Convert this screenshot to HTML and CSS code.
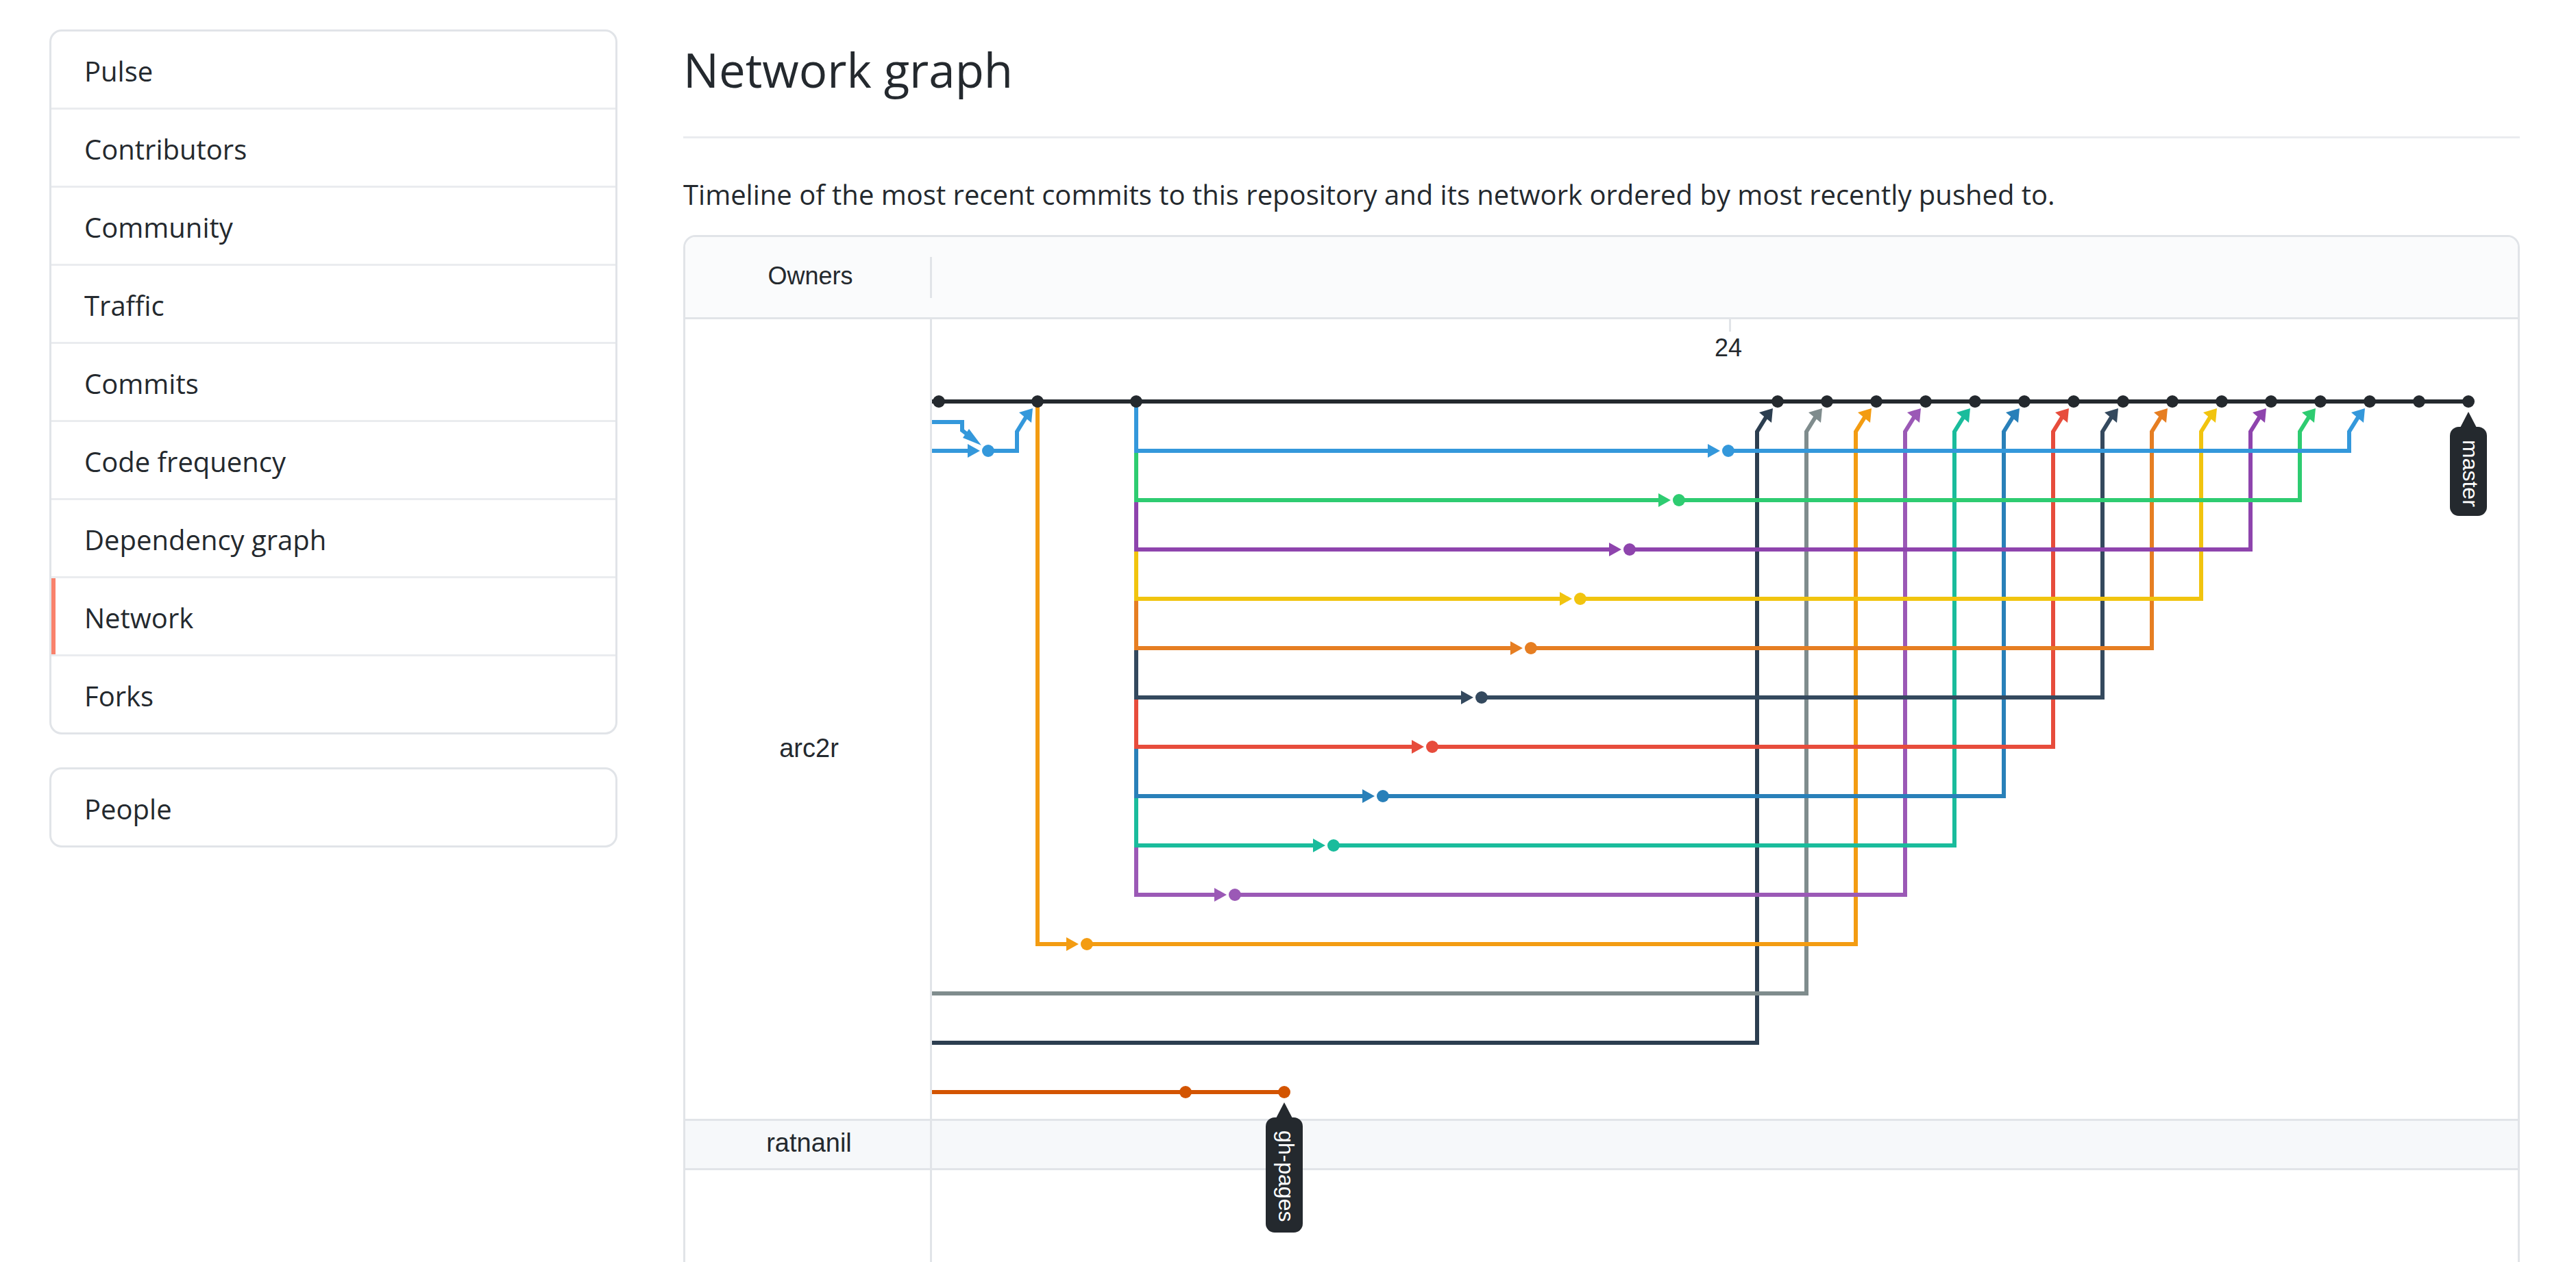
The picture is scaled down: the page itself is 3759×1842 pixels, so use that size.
FILE: index.html
```html
<!DOCTYPE html>
<html lang="en">
<head>
<meta charset="utf-8">
<meta name="viewport" content="width=device-width, initial-scale=1">
<title>Network graph</title>
<link rel="stylesheet" href="styles.css">
</head>
<body>
<div class="page">
  <aside class="sidebar">
    <nav class="menu" aria-label="Insights">
      <a class="menu-item" href="#pulse">Pulse</a>
      <a class="menu-item" href="#contributors">Contributors</a>
      <a class="menu-item" href="#community">Community</a>
      <a class="menu-item" href="#traffic">Traffic</a>
      <a class="menu-item" href="#commits">Commits</a>
      <a class="menu-item" href="#code-frequency">Code frequency</a>
      <a class="menu-item" href="#dependencies">Dependency graph</a>
      <a class="menu-item selected" href="#network" aria-current="page">Network</a>
      <a class="menu-item" href="#forks">Forks</a>
    </nav>
    <nav class="menu" aria-label="People">
      <a class="menu-item" href="#people">People</a>
    </nav>
  </aside>

  <main class="content">
    <h1 class="title">Network graph</h1>
    <p class="lead">Timeline of the most recent commits to this repository and its network ordered by most recently pushed to.</p>

    <section class="network" aria-label="Network graph">
      <div class="network-head">
        <div class="head-cell">Owners</div>
      </div>
      <div class="network-body">
        <div class="row row-main"><div class="owner">arc2r</div></div>
        <div class="row row-fork"><div class="owner">ratnanil</div></div>
        <div class="row row-rest"><div class="owner"></div></div>

        <svg class="graph" role="img" aria-label="Commit timeline">
          <defs>
            <!-- arrow heads and dots, placed by the centre of their commit -->
            <path id="merge" d="M-7 10L-27 16L-9 31Z"/>
            <path id="fork" d="M-12 0L-30 -10V10Z"/>
            <circle id="dot" r="9"/>
          </defs>

          <rect class="tick" x="1163" y="0" width="3" height="18"/>
          <text class="date" x="1162" y="54">24</text>

          <g class="branch orange-dark">
            <path d="M0 1128H514"/>
            <use href="#dot" x="370" y="1128"/><use href="#dot" x="514" y="1128"/>
          </g>
          <g class="branch midnight">
            <path d="M0 1056H1204V164L1217 143"/>
            <use href="#merge" x="1234" y="120"/>
          </g>
          <g class="branch gray">
            <path d="M0 984H1276V164L1289 143"/>
            <use href="#merge" x="1306" y="120"/>
          </g>
          <g class="branch amber">
            <path d="M154 120V912H196M226 912H1348V164L1361 143"/>
            <use href="#fork" x="226" y="912"/><use href="#dot" x="226" y="912"/><use href="#merge" x="1378" y="120"/>
          </g>
          <g class="branch violet">
            <path d="M298 120V840H412M442 840H1420V164L1433 143"/>
            <use href="#fork" x="442" y="840"/><use href="#dot" x="442" y="840"/><use href="#merge" x="1450" y="120"/>
          </g>
          <g class="branch teal">
            <path d="M298 120V768H556M586 768H1492V164L1505 143"/>
            <use href="#fork" x="586" y="768"/><use href="#dot" x="586" y="768"/><use href="#merge" x="1522" y="120"/>
          </g>
          <g class="branch blue-dark">
            <path d="M298 120V696H628M658 696H1564V164L1577 143"/>
            <use href="#fork" x="658" y="696"/><use href="#dot" x="658" y="696"/><use href="#merge" x="1594" y="120"/>
          </g>
          <g class="branch red">
            <path d="M298 120V624H700M730 624H1636V164L1649 143"/>
            <use href="#fork" x="730" y="624"/><use href="#dot" x="730" y="624"/><use href="#merge" x="1666" y="120"/>
          </g>
          <g class="branch slate">
            <path d="M298 120V552H772M802 552H1708V164L1721 143"/>
            <use href="#fork" x="802" y="552"/><use href="#dot" x="802" y="552"/><use href="#merge" x="1738" y="120"/>
          </g>
          <g class="branch orange">
            <path d="M298 120V480H844M874 480H1780V164L1793 143"/>
            <use href="#fork" x="874" y="480"/><use href="#dot" x="874" y="480"/><use href="#merge" x="1810" y="120"/>
          </g>
          <g class="branch yellow">
            <path d="M298 120V408H916M946 408H1852V164L1865 143"/>
            <use href="#fork" x="946" y="408"/><use href="#dot" x="946" y="408"/><use href="#merge" x="1882" y="120"/>
          </g>
          <g class="branch purple">
            <path d="M298 120V336H988M1018 336H1924V164L1937 143"/>
            <use href="#fork" x="1018" y="336"/><use href="#dot" x="1018" y="336"/><use href="#merge" x="1954" y="120"/>
          </g>
          <g class="branch green">
            <path d="M298 120V264H1060M1090 264H1996V164L2009 143"/>
            <use href="#fork" x="1090" y="264"/><use href="#dot" x="1090" y="264"/><use href="#merge" x="2026" y="120"/>
          </g>
          <g class="branch blue">
            <path d="M298 120V192H1132M1162 192H2068V164L2081 143"/>
            <use href="#fork" x="1162" y="192"/><use href="#dot" x="1162" y="192"/><use href="#merge" x="2098" y="120"/>
            <path d="M0 192H52M82 192H124V164L137 143M0 150H44V162L54 170"/>
            <path class="head" d="M72 184L45 173L54 160Z"/>
            <use href="#fork" x="82" y="192"/><use href="#dot" x="82" y="192"/><use href="#merge" x="154" y="120"/>
          </g>
          <g class="branch ink">
            <path d="M0 120H2242"/>
            <use href="#dot" x="10" y="120"/><use href="#dot" x="154" y="120"/><use href="#dot" x="298" y="120"/>
            <use href="#dot" x="1234" y="120"/><use href="#dot" x="1306" y="120"/><use href="#dot" x="1378" y="120"/>
            <use href="#dot" x="1450" y="120"/><use href="#dot" x="1522" y="120"/><use href="#dot" x="1594" y="120"/>
            <use href="#dot" x="1666" y="120"/><use href="#dot" x="1738" y="120"/><use href="#dot" x="1810" y="120"/>
            <use href="#dot" x="1882" y="120"/><use href="#dot" x="1954" y="120"/><use href="#dot" x="2026" y="120"/>
            <use href="#dot" x="2098" y="120"/><use href="#dot" x="2170" y="120"/><use href="#dot" x="2242" y="120"/>
          </g>

          <g class="ref" transform="translate(2242 120)">
            <path d="M0 15L13 40H-13Z"/>
            <rect x="-27" y="37" width="54" height="130" rx="13"/>
            <text transform="translate(-8 56) rotate(90)">master</text>
          </g>
          <g class="ref" transform="translate(514 1128)">
            <path d="M0 15L13 40H-13Z"/>
            <rect x="-27" y="37" width="54" height="168" rx="13"/>
            <text transform="translate(-8 56) rotate(90)">gh-pages</text>
          </g>
        </svg>
      </div>
    </section>
  </main>
</div>
</body>
</html>
```
FILE: styles.css
```css
* {
  box-sizing: border-box;
}

body {
  margin: 0;
  background: #fff;
  color: #24292e;
  font-family: "Segoe UI", "Open Sans", "Noto Sans", sans-serif;
  font-size: 40px;
  line-height: 63px;
}

.page {
  display: flex;
  gap: 96px;
  min-height: 100vh;
  padding: 43px 82px 0 72px;
}

/* Sidebar */
.sidebar {
  flex: 0 0 829px;
  display: flex;
  flex-direction: column;
  gap: 48px;
}

.menu {
  border: 3px solid #e1e4e8;
  border-radius: 18px;
  overflow: hidden;
}

.menu-item {
  display: block;
  position: relative;
  padding: 26px 48px 22px;
  border-bottom: 3px solid #eaecef;
  color: inherit;
  text-decoration: none;
}

.menu-item:last-child {
  border-bottom: 0;
}

.menu-item.selected::before {
  content: "";
  position: absolute;
  top: 0;
  bottom: 0;
  left: 0;
  width: 6px;
  background: #f9826c;
}

/* Main column */
.content {
  flex: 1;
  min-width: 0;
  display: flex;
  flex-direction: column;
}

.title {
  margin: 0;
  padding-bottom: 40px;
  border-bottom: 3px solid #eaecef;
  font-size: 69px;
  font-weight: 400;
  line-height: 116px;
}

.lead {
  margin: 50px 0 28px;
}

.network {
  flex: 1;
  display: flex;
  flex-direction: column;
  border: 3px solid #e1e4e8;
  border-bottom: 0;
  border-radius: 18px 18px 0 0;
  font-family: "Liberation Sans", Arial, sans-serif;
}

.network-head {
  display: flex;
  align-items: center;
  height: 120px;
  border-bottom: 3px solid #e1e4e8;
  border-radius: 15px 15px 0 0;
  background: #fafbfc;
}

.head-cell {
  width: 360px;
  height: 60px;
  padding-left: 8px;
  border-right: 3px solid #e1e4e8;
  font-size: 36px;
  line-height: 56px;
  text-align: center;
}

.network-body {
  position: relative;
  flex: 1;
  display: flex;
  flex-direction: column;
}

.row {
  display: flex;
  border-bottom: 3px solid #e1e4e8;
}

.row-main {
  height: 1170px;
}

.row-main .owner {
  padding-top: 86px;
}

.row-fork {
  height: 72px;
  background: #f6f8fa;
}

.row-fork .owner {
  padding-bottom: 4px;
}

.row-rest {
  flex: 1;
  border-bottom: 0;
}

.owner {
  display: flex;
  align-items: center;
  justify-content: center;
  width: 360px;
  padding-left: 4px;
  border-right: 3px solid #e1e4e8;
  font-size: 38px;
}

/* Timeline drawn over the owner rows */
.graph {
  position: absolute;
  top: 0;
  left: 360px;
  width: calc(100% - 360px);
  height: 100%;
}

.tick {
  fill: #e1e4e8;
}

.date {
  fill: #24292e;
  font-size: 36px;
  text-anchor: middle;
}

.branch {
  fill: currentColor;
}

.branch > path {
  fill: none;
  stroke: currentColor;
  stroke-width: 6px;
}

.branch > .head {
  fill: currentColor;
  stroke: none;
}

.ink { color: #24292e; }
.blue { color: #3498db; }
.green { color: #2ecc71; }
.purple { color: #8e44ad; }
.yellow { color: #f1c40f; }
.orange { color: #e67e22; }
.slate { color: #34495e; }
.red { color: #e74c3c; }
.blue-dark { color: #2980b9; }
.teal { color: #1abc9c; }
.violet { color: #9b59b6; }
.amber { color: #f39c12; }
.gray { color: #7f8c8d; }
.midnight { color: #2c3e50; }
.orange-dark { color: #d35400; }

.ref {
  fill: #24292e;
}

.ref text {
  fill: #fff;
  font-size: 32px;
}
```
